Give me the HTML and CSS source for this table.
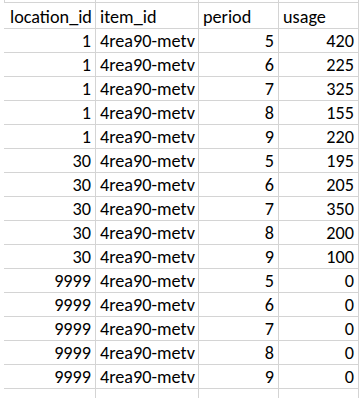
FILE: index.html
```html
<!DOCTYPE html>
<html>
<head>
<meta charset="utf-8">
<link rel="stylesheet" href="styles.css">
</head>
<body>
<table class="sheet">
<colgroup><col class="c1"><col class="c2"><col class="c3"><col class="c4"></colgroup>
<tr class="top"><td></td><td></td><td></td><td></td></tr>
<tr class="head"><td>location_id</td><td>item_id</td><td>period</td><td>usage</td></tr>
<tr><td class="n">1</td><td>4rea90-metv</td><td class="n">5</td><td class="n">420</td></tr>
<tr><td class="n">1</td><td>4rea90-metv</td><td class="n">6</td><td class="n">225</td></tr>
<tr><td class="n">1</td><td>4rea90-metv</td><td class="n">7</td><td class="n">325</td></tr>
<tr><td class="n">1</td><td>4rea90-metv</td><td class="n">8</td><td class="n">155</td></tr>
<tr><td class="n">1</td><td>4rea90-metv</td><td class="n">9</td><td class="n">220</td></tr>
<tr><td class="n">30</td><td>4rea90-metv</td><td class="n">5</td><td class="n">195</td></tr>
<tr><td class="n">30</td><td>4rea90-metv</td><td class="n">6</td><td class="n">205</td></tr>
<tr><td class="n">30</td><td>4rea90-metv</td><td class="n">7</td><td class="n">350</td></tr>
<tr><td class="n">30</td><td>4rea90-metv</td><td class="n">8</td><td class="n">200</td></tr>
<tr><td class="n">30</td><td>4rea90-metv</td><td class="n">9</td><td class="n">100</td></tr>
<tr><td class="n">9999</td><td>4rea90-metv</td><td class="n">5</td><td class="n">0</td></tr>
<tr><td class="n">9999</td><td>4rea90-metv</td><td class="n">6</td><td class="n">0</td></tr>
<tr><td class="n">9999</td><td>4rea90-metv</td><td class="n">7</td><td class="n">0</td></tr>
<tr><td class="n">9999</td><td>4rea90-metv</td><td class="n">8</td><td class="n">0</td></tr>
<tr><td class="n">9999</td><td>4rea90-metv</td><td class="n">9</td><td class="n">0</td></tr>
<tr class="last"><td></td><td></td><td></td><td></td></tr>
</table>
</body>
</html>
```
FILE: styles.css
```css
html, body {
  margin: 0;
  padding: 0;
  background: #ffffff;
}
.sheet {
  border-collapse: collapse;
  table-layout: fixed;
  width: 355px;
  margin-left: 4px;
  margin-top: -1px;
  font-family: Carlito, "Liberation Sans", Arial, sans-serif;
  font-size: 18.2px;
  color: #000000;
}
.c1 { width: 91px; }
.c2 { width: 103px; }
.c3 { width: 80px; }
.c4 { width: 80px; }
.sheet td {
  border: 1px solid #d4d4d4;
  height: 24px;
  padding: 0 4px 2px 4px;
  line-height: 18px;
  vertical-align: bottom;
  white-space: nowrap;
  overflow: hidden;
  box-sizing: border-box;
}
.sheet td:first-child {
  border-left-color: transparent;
  padding-left: 5px;
}
.sheet tr.top td {
  height: 3px;
  padding: 0;
}
.sheet tr.top td:first-child {
  border-left-color: #d4d4d4;
}
.sheet tr.head td {
  height: 26px;
}
.sheet td.n {
  text-align: right;
}
```
